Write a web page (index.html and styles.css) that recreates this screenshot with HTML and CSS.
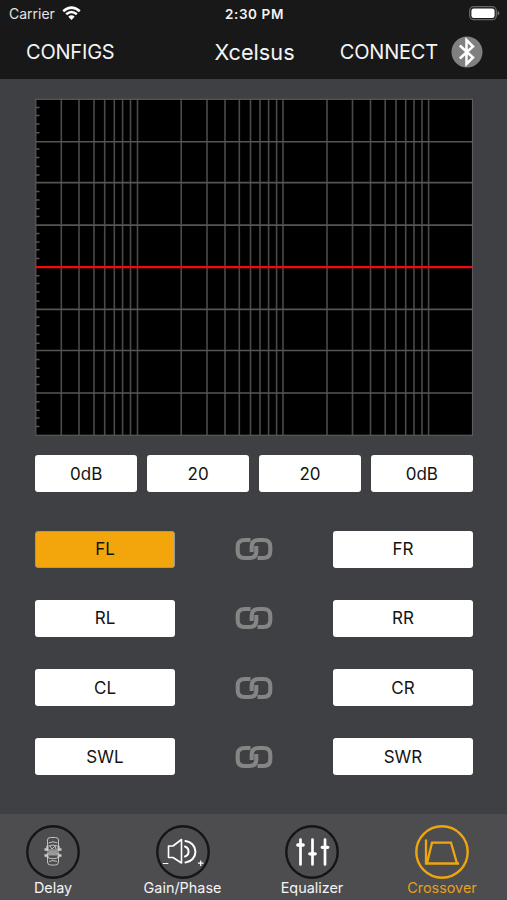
FILE: index.html
```
<!DOCTYPE html>
<html lang="en">
<head>
  <meta charset="UTF-8">
  <title>Xcelsus</title>
  <meta name="viewport" content="width=device-width, initial-scale=1.0">
  <link rel="stylesheet" href="styles.css">
</head>
<body>
  <svg class="defs" width="0" height="0">
    <symbol id="link" viewBox="0 0 38 24">
      <path d="M15.500 3H10C5 3 2.700 5.500 2.700 9.500V14.500C2.700 18.500 5 21 9.500 21H14.500C19 21 21.300 18.500 21.300 14.500V9" />
      <path d="M22.500 21H28C33 21 35.300 18.500 35.300 14.500V9.500C35.300 5.500 33 3 28.500 3H23.500C19 3 16.700 5.500 16.700 9.500V15" />
    </symbol>
  </svg>

  <header class="header">
    <div class="status">
      <div class="carrier">
        <span>Carrier</span>
        <svg width="19" height="15" viewBox="0 0 19 15">
          <path d="M1.200 5.300Q9.500-2 17.800 5.300M4.200 8.300Q9.500 3.600 14.800 8.300" fill="none" stroke="#fff" stroke-width="2.500" />
          <path d="M6.300 10.700Q9.500 8 12.700 10.700L9.500 14Z" fill="#fff" />
        </svg>
      </div>
      <span class="clock">2:30 PM</span>
      <svg class="battery" width="31" height="15" viewBox="0 0 31 15">
        <rect x="0.700" y="0.700" width="26.600" height="13" rx="4" fill="none" stroke="#666" stroke-width="1.300" />
        <rect x="2.400" y="2.400" width="23.200" height="9.600" rx="2.300" fill="#fff" />
        <path d="M28.600 5v4.600q1.700-.6 1.700-2.300T28.600 5Z" fill="#777" />
      </svg>
    </div>
    <div class="nav">
      <span class="configs">CONFIGS</span>
      <span class="title">Xcelsus</span>
      <div class="connect">
        <span>CONNECT</span>
        <svg width="32" height="32" viewBox="0 0 32 32">
          <circle cx="16" cy="16" r="15.500" fill="#808080" />
          <path d="M8.800 9.500L22 21.500L15.500 28V4L22 10.500L8.800 22.500" fill="none" stroke="#fff" stroke-width="2.500" />
        </svg>
      </div>
    </div>
  </header>

  <main class="main">
    <svg class="chart" width="438" height="338" viewBox="35 98 438 338">
      <rect x="35.500" y="99" width="437" height="336.500" fill="#000" />
      <path class="grid-v" d="M61.300 99V435M79 99V435M94 99V435M104.700 99V435M114.300 99V435M122.600 99V435M130.500 99V435M137.500 99V435M181.200 99V435M207 99V435M225 99V435M239.300 99V435M250.500 99V435M260 99V435M268.600 99V435M276.600 99V435M283 99V435M327 99V435M352.500 99V435M370.500 99V435M385.200 99V435M396 99V435M405.700 99V435M414 99V435M422 99V435M428.600 99V435" />
      <path class="grid-h" d="M36 141.700H472M36 182.600H472M36 225.100H472M36 309.400H472M36 350.500H472M36 393H472" />
      <path class="grid-h" d="M36 107.500h3.500M36 115.500h3.500M36 124h3.500M36 132.700h3.500M36 149h3.500M36 157.500h3.500M36 166.500h3.500M36 175h3.500M36 191.500h3.500M36 200h3.500M36 208.700h3.500M36 216.500h3.500M36 233.500h3.500M36 242h3.500M36 249.700h3.500M36 258.500h3.500M36 275.700h3.500M36 283.500h3.500M36 292h3.500M36 301h3.500M36 317.300h3.500M36 325.700h3.500M36 334.500h3.500M36 343.300h3.500M36 359.500h3.500M36 368.300h3.500M36 376.700h3.500M36 384.500h3.500M36 401.700h3.500M36 410.300h3.500M36 418h3.500M36 426.500h3.500" />
      <rect class="frame" x="35.800" y="99.300" width="436.700" height="336" />
      <path d="M36 267.200H472.500" stroke="#ee0c10" stroke-width="2.300" />
    </svg>

    <div class="values">
      <div class="btn">0dB</div>
      <div class="btn">20</div>
      <div class="btn">20</div>
      <div class="btn">0dB</div>
    </div>

    <div class="channels">
      <div class="btn active">FL</div>
      <svg class="link"><use href="#link" /></svg>
      <div class="btn">FR</div>
      <div class="btn">RL</div>
      <svg class="link"><use href="#link" /></svg>
      <div class="btn">RR</div>
      <div class="btn">CL</div>
      <svg class="link"><use href="#link" /></svg>
      <div class="btn">CR</div>
      <div class="btn">SWL</div>
      <svg class="link"><use href="#link" /></svg>
      <div class="btn">SWR</div>
    </div>
  </main>

  <footer class="tabs">
    <div class="tab">
      <svg class="icon" viewBox="0 0 54 54">
        <circle class="ring" cx="27" cy="27" r="25.700" />
        <g fill="none" stroke="#ccc" stroke-width="0.900">
          <path d="M21.500 24V15Q21.500 12.500 24.500 12.500H29.500Q32.500 12.500 32.500 15V24M21.500 31V37Q21.500 40 24.500 40H29.500Q32.500 40 32.500 37V31M22.500 18Q27 15.500 31.500 18M23 36.500Q27 34.500 31 36.500" />
          <path d="M20.500 21.500Q27 18.500 33.500 21.500L32.500 25H21.500ZM20.500 29Q27 26 33.500 29M20.500 32Q27 35.500 33.500 32M22 22V33M32 22V33M24 21L26 24L29 21L30 24" />
          <path d="M18.500 24.500H22M32 24.500H35.500M18.500 30.500H22M32 30.500H35.500" stroke-width="2.400" />
        </g>
        <path d="M23 25.500h8v5h-8Z" fill="#999" />
      </svg>
      <span>Delay</span>
    </div>
    <div class="tab">
      <svg class="icon" viewBox="0 0 54 54">
        <circle class="ring" cx="27" cy="27" r="25.700" />
        <path d="M12.500 21H17L25.500 14.500V38L17 32.500H12.500Z" fill="none" stroke="#fff" stroke-width="1.600" stroke-linejoin="round" />
        <path d="M29 21.500A5.300 5.300 0 0 1 29 31.500M29.500 16A11 10.800 0 0 1 29.500 37.500" fill="none" stroke="#fff" stroke-width="2" stroke-linecap="round" />
        <path d="M6.800 38.500h5.500M42 38.200h5.500M44.700 35.500v5.500" stroke="#fff" stroke-width="1.200" />
      </svg>
      <span>Gain/Phase</span>
    </div>
    <div class="tab">
      <svg class="icon" viewBox="0 0 54 54">
        <circle class="ring" cx="27" cy="27" r="25.700" />
        <g stroke="#fff" stroke-linecap="round">
          <path d="M15.500 14.500V39.500M27.500 14.500V39.500M40 14.500V39.500" stroke-width="2.700" />
          <path d="M12.800 20H18.200M24.800 28.800H30.200M37.200 22.300H42.800" stroke-width="3.300" />
        </g>
      </svg>
      <span>Equalizer</span>
    </div>
    <div class="tab selected">
      <svg class="icon" viewBox="0 0 54 54">
        <circle class="ring" cx="27" cy="27" r="25.700" />
        <path d="M11 14.500V38.500H44M12 38L17 17.700H36L42 38.500" fill="none" stroke="#eea60f" stroke-width="2.300" />
      </svg>
      <span>Crossover</span>
    </div>
  </footer>
</body>
</html>
```
FILE: styles.css
```
* { box-sizing: border-box; }
body { font-family: Inter, "Liberation Sans", sans-serif; margin: 0; height: 900px; background: #3f4043; color: #f4f4f4; display: flex; flex-direction: column; overflow: hidden; }
svg { display: block; flex: none; }
.defs { position: absolute; }

.header { height: 79px; background: #181818; }
.status { height: 27px; padding: 0 7px 0 9px; display: grid; grid-template-columns: 1fr auto 1fr; align-items: center; font-size: 14px; }
.carrier { display: flex; align-items: center; gap: 7px; color: #e3e3e3; }
.clock { font-weight: 600; font-size: 13.500px; letter-spacing: 0.6px; }
.battery { justify-self: end; }
.nav { height: 50px; padding: 0 24px 0 26px; display: grid; grid-template-columns: 1fr auto 1fr; align-items: center; font-size: 20px; }
.configs, .connect span { letter-spacing: -0.2px; }
.title { font-size: 21.700px; }
.connect { justify-self: end; display: flex; align-items: center; gap: 13px; }

.main { flex: 1; padding: 19px 34px 0 35px; }
.chart { display: block; }
.grid-v { stroke: #4a4a4a; stroke-width: 1.600; }
.grid-h { stroke: #555; stroke-width: 1.600; }
.frame { fill: none; stroke: #5c5d5f; stroke-width: 1.200; }
.btn { height: 37px; background: #fff; color: #141414; border-radius: 3px; display: flex; align-items: center; justify-content: center; font-size: 17px; }
.btn.active { background: #f2a60c; border: 1px solid #999; }
.values { display: grid; grid-template-columns: repeat(4, 1fr); gap: 9.500px; margin-top: 19px; }
.channels { display: grid; grid-template-columns: 140px 1fr 140px; row-gap: 32.300px; margin-top: 38.500px; align-items: center; }
.link { width: 38px; height: 24px; justify-self: center; fill: none; stroke: #858585; stroke-width: 4.100; }

.tabs { height: 86px; background: #4d4d4f; padding-top: 11px; display: grid; grid-template-columns: 118px 129px 130px 130px; }
.tab { display: flex; flex-direction: column; align-items: center; font-size: 14.400px; }
.tab:first-child { padding-right: 12px; }
.tab span { line-height: 18px; }
.icon { width: 54px; height: 54px; }
.ring { fill: none; stroke: #151515; stroke-width: 2.400; }
.selected { color: #e5a11b; }
.selected .ring { stroke: #eea60f; }
```
